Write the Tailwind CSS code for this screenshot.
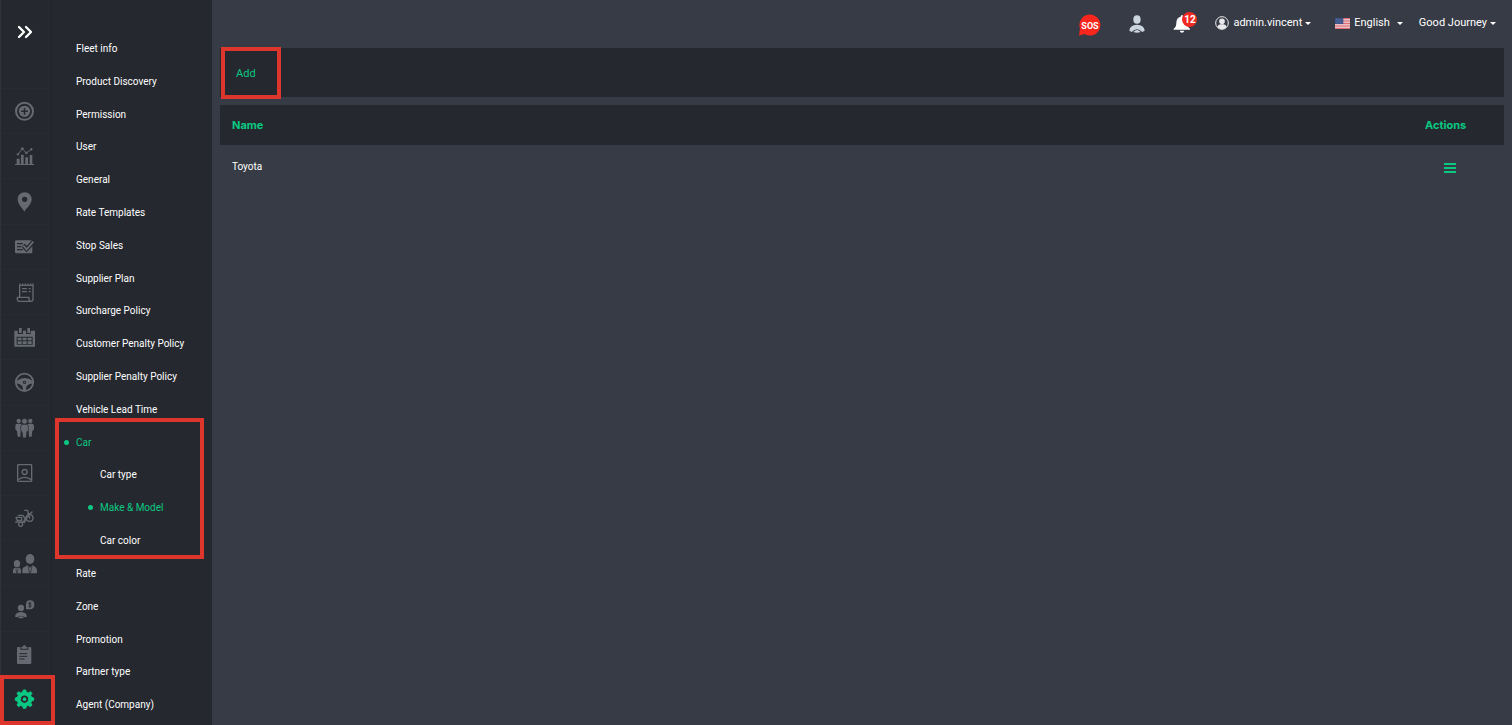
<!DOCTYPE html>
<html lang="en">
<head>
<meta charset="utf-8">
<meta name="viewport" content="width=device-width, initial-scale=1">
<title>Make &amp; Model</title>
<script src="https://cdn.jsdelivr.net/npm/@tailwindcss/browser@4"></script>
</head>
<body class="flex min-h-screen bg-[#373b45] font-[Roboto,'Liberation_Sans',sans-serif] text-[10px] text-white">

<!-- Icon rail -->
<nav aria-label="Main" class="relative flex w-[52px] shrink-0 flex-col border-x border-l-[#30333c] border-r-[#20232a] bg-[#25282f] pb-1 text-[#666971]">
  <button aria-label="Expand menu" class="flex h-[88px] items-start justify-center pt-[19px] pr-1 text-white">
    <svg class="size-[26px]" viewBox="33 57 78 78" fill="none" stroke="currentColor" stroke-width="7" stroke-linecap="round" stroke-linejoin="round"><path d="M57 81l15 15-15 15M78 81l15 15-15 15"/></svg>
  </button>
  <a href="#" aria-label="New booking" class="flex flex-1 items-center justify-center border-t border-[#282b32] pr-1">
    <svg class="size-[26px]" viewBox="33 23 78 78" fill="none" stroke="currentColor"><circle cx="73.500" cy="63" r="25.500" stroke-width="6"/><circle cx="73.500" cy="63" r="17" fill="currentColor" stroke="none"/><path d="M73.500 53v20M63.500 63h20" stroke="#25282f" stroke-width="4.500"/></svg>
  </a>
  <a href="#" aria-label="Dashboard" class="flex flex-1 items-center justify-center border-t border-[#282b32] pr-1">
    <svg class="size-[26px]" viewBox="33 159 78 78" fill="currentColor"><path d="M45 222h57v3H45zM50 206h9v16h-9zM63 194h8v28h-8zM76 202h8v20h-8zM89 195h8v27h-8z"/><g stroke="currentColor" stroke-width="3"><path d="M54 193l13-17 12 13 15-11" fill="none"/><circle cx="54" cy="193" r="2.500"/><circle cx="67" cy="176" r="3"/><circle cx="79" cy="189" r="2.500"/><circle cx="94" cy="178" r="2.500"/></g></svg>
  </a>
  <a href="#" aria-label="Map" class="flex flex-1 items-center justify-center border-t border-[#282b32] pr-1">
    <svg class="size-[26px]" viewBox="33 295 78 78" fill="currentColor"><path fill-rule="evenodd" d="M74 305c-12 0-21 9-21 21 0 14 13 25 20 37 8-12 22-23 22-37 0-12-9-21-21-21zm0 13a8 8 0 110 16 8 8 0 010-16z"/></svg>
  </a>
  <a href="#" aria-label="Bookings" class="flex flex-1 items-center justify-center border-t border-[#282b32] pr-1">
    <svg class="size-[26px]" viewBox="33 25 78 78" fill="currentColor"><path d="M49 44h46l-14 17-7-7-7 7 13 14 17-19v24q0 3-3 3H49q-4 0-4-4V48q0-4 4-4z"/><path d="M51 54h17M51 63h13M51 72h17" stroke="#25282f" stroke-width="3.500"/><path d="M70 61l10 10 21-22" fill="none" stroke="#25282f" stroke-width="12"/><path d="M70 60l10 11 20-23" fill="none" stroke="currentColor" stroke-width="6"/></svg>
  </a>
  <a href="#" aria-label="Reports" class="flex flex-1 items-center justify-center border-t border-[#282b32] pr-1">
    <svg class="size-[26px]" viewBox="33 161 78 78" fill="none" stroke="currentColor" stroke-width="4" stroke-linejoin="round"><path d="M59 215v-35h40v42q0 6-6 6H58q-6 0-6-6v-6h35v6q0 6 6 6"/><path d="M58 177h4M66 177h4M74 177h4M82 177h4M90 177h4M97 177h4" stroke-width="5"/><path d="M66 190h15M86 190h6M66 199h15M86 199h6" stroke-width="3.500"/></svg>
  </a>
  <a href="#" aria-label="Calendar" class="flex flex-1 items-center justify-center border-t border-[#282b32] pr-1">
    <svg class="size-[26px]" viewBox="33 297 78 78" fill="currentColor"><path fill-rule="evenodd" d="M43 317h10v10h16v-10h9v10h14v-10h13v48H43zM50 335v24h48v-24z"/><path d="M57 309h8v15h-8zM70 317h7v7h-7zM82 309h8v15h-8z"/><path d="M53 338h12v8H53zM68 338h12v8H68zM83 338h12v8H83zM53 349h12v8H53zM68 349h12v8H68zM83 349h12v8H83z"/></svg>
  </a>
  <a href="#" aria-label="Drivers" class="flex flex-1 items-center justify-center border-t border-[#282b32] pr-1">
    <svg class="size-[26px]" viewBox="33 28 78 78" fill="none" stroke="currentColor"><circle cx="73.500" cy="68" r="26" stroke-width="5.500"/><path fill="currentColor" stroke="none" fill-rule="evenodd" d="M49 65q12-10 25-10t25 10v6q-13 2-19 8l-3 14h-7l-3-14q-6-6-18-8zM73.500 63a5 5 0 100 10 5 5 0 000-10z"/><circle cx="73.500" cy="68" r="2" fill="currentColor" stroke="none"/></svg>
  </a>
  <a href="#" aria-label="Customers" class="flex flex-1 items-center justify-center border-t border-[#282b32] pr-1">
    <svg class="size-[26px]" viewBox="33 164 78 78" fill="currentColor"><circle cx="56" cy="182" r="6.500"/><circle cx="91" cy="182" r="6.500"/><path d="M52 190h9q4 0 4 5v13l-3 4-1 17h-8l-2-17-5-5v-11q0-6 6-6zM86 190h9q7 0 7 6v11l-5 5-2 17h-8l-1-17-4-4v-13q0-5 4-5z"/><g stroke="#25282f" stroke-width="2"><circle cx="73.500" cy="183" r="8.500"/><path d="M69 192h9q7 0 7 7v11l-4 4-3 19h-9l-3-19-4-4v-11q0-7 7-7z"/></g></svg>
  </a>
  <a href="#" aria-label="Contacts" class="flex flex-1 items-center justify-center border-t border-[#282b32] pr-1">
    <svg class="size-[26px]" viewBox="33 300 78 78" fill="none" stroke="currentColor" stroke-width="4"><rect x="53" y="314" width="42" height="50" rx="2"/><circle cx="74" cy="336" r="7.500"/><path d="M55 359q18-14 38 0"/></svg>
  </a>
  <a href="#" aria-label="Delivery" class="flex flex-1 items-center justify-center border-t border-[#282b32] pr-1">
    <svg class="size-[26px]" viewBox="33 31 78 78" fill="none" stroke="currentColor" stroke-width="4" stroke-linecap="round" stroke-linejoin="round"><circle cx="89" cy="70" r="10"/><circle cx="62" cy="89" r="6"/><path d="M74 47h9l6 23M83 57h8l5-5M79 66l-9 16h-7M73 84q3-13 13-21M48 68h17v9H51zM47 82h12M55 62h14l5 8"/></svg>
  </a>
  <a href="#" aria-label="Partners" class="flex flex-1 items-center justify-center border-t border-[#282b32] pr-1">
    <svg class="size-[26px]" viewBox="33 166 78 78" fill="currentColor"><ellipse cx="90" cy="193" rx="13" ry="15"/><path d="M67 236v-11q0-7 8-9l7-4 8 7 8-7 7 4q6 3 6 11v9z"/><ellipse cx="51" cy="207" rx="9.500" ry="11"/><path d="M39 236v-9q0-6 6-8l6 2 6-2q6 2 6 8v9z"/><path d="M84 215l5 21M96 215l-5 21M48 222l2 14M54 222l-2 14" stroke="#25282f" stroke-width="2"/></svg>
  </a>
  <a href="#" aria-label="Payouts" class="flex flex-1 items-center justify-center border-t border-[#282b32] pr-1">
    <svg class="size-[26px]" viewBox="33 302 78 78" fill="currentColor"><circle cx="63" cy="338" r="9.500"/><path d="M45 364q1-13 18-14 17 1 18 14l-6 2q-12-9-24 0z"/><path d="M54 366q9-6 18 0l-4 3H58z"/><path d="M78 342v-14q0-13 12-13 13 0 13 13t-13 14z"/><path d="M94 324q-5-4-8 0-1 3 4 4 5 2 3 5-3 4-8 0M90 320v17" fill="none" stroke="#25282f" stroke-width="2.500"/></svg>
  </a>
  <a href="#" aria-label="Logs" class="flex flex-1 items-center justify-center border-t border-[#282b32] pr-1">
    <svg class="size-[26px]" viewBox="33 138 78 78" fill="currentColor"><path d="M55 156h6v8h24v-8h5q4 0 4 4v43q0 4-4 4H55q-4 0-4-4v-43q0-4 4-4z"/><path d="M64 161v-6h5q0-5 4-5t4 5h5v6z"/><path d="M58 176h24M58 184h24M58 192h16" stroke="#25282f" stroke-width="3"/></svg>
  </a>
  <a href="#" aria-label="Settings" aria-current="page" class="flex flex-1 items-center justify-center border-t border-[#282b32] pr-1 text-[#0bc983]">
    <svg class="size-[26px]" viewBox="33 274 78 78" fill="currentColor"><path fill-rule="evenodd" stroke="currentColor" stroke-width="3" stroke-linejoin="round" d="M70 286h7l2 7 6 2 6-4 5 5-4 6 3 6 6 2v7l-6 2-3 6 4 6-5 5-6-4-6 3-2 6h-7l-2-6-6-3-6 4-5-5 4-6-3-6-6-2v-7l6-2 3-6-4-6 5-5 6 4 6-2zM73.500 301a12.500 12.500 0 100 25 12.500 12.500 0 000-25z"/><circle cx="73.500" cy="313.500" r="5.500"/></svg>
  </a>
  <div class="pointer-events-none absolute bottom-0 -left-px z-10 h-[50px] w-[55px] border-4 border-[#de352d]"></div>
</nav>

<!-- Settings menu -->
<nav aria-label="Settings" class="w-40 shrink-0 bg-[#25282f]">
  <ul class="flex h-full flex-col pt-8 pb-1 pl-6">
    <li class="flex min-h-6 flex-1 items-center"><a href="#">Fleet info</a></li>
    <li class="flex min-h-6 flex-1 items-center"><a href="#">Product Discovery</a></li>
    <li class="flex min-h-6 flex-1 items-center"><a href="#">Permission</a></li>
    <li class="flex min-h-6 flex-1 items-center"><a href="#">User</a></li>
    <li class="flex min-h-6 flex-1 items-center"><a href="#">General</a></li>
    <li class="flex min-h-6 flex-1 items-center"><a href="#">Rate Templates</a></li>
    <li class="flex min-h-6 flex-1 items-center"><a href="#">Stop Sales</a></li>
    <li class="flex min-h-6 flex-1 items-center"><a href="#">Supplier Plan</a></li>
    <li class="flex min-h-6 flex-1 items-center"><a href="#">Surcharge Policy</a></li>
    <li class="flex min-h-6 flex-1 items-center"><a href="#">Customer Penalty Policy</a></li>
    <li class="flex min-h-6 flex-1 items-center"><a href="#">Supplier Penalty Policy</a></li>
    <li class="flex min-h-6 flex-1 items-center"><a href="#">Vehicle Lead Time</a></li>
    <li class="relative -ml-3 flex flex-4 flex-col">
      <div class="flex min-h-6 flex-1 items-center gap-[7px] text-[#0bc983]"><span class="size-[5px] rounded-full bg-current"></span><a href="#">Car</a></div>
      <ul class="flex flex-3 flex-col pl-6">
        <li class="flex min-h-6 flex-1 items-center pl-3"><a href="#">Car type</a></li>
        <li class="flex min-h-6 flex-1 items-center gap-[7px] text-[#0bc983]"><span class="size-[5px] rounded-full bg-current"></span><a href="#" aria-current="page">Make &amp; Model</a></li>
        <li class="flex min-h-6 flex-1 items-center pl-3"><a href="#">Car color</a></li>
      </ul>
      <div class="pointer-events-none absolute -top-2 right-2 -bottom-0.5 -left-[9px] border-4 border-[#de352d]"></div>
    </li>
    <li class="flex min-h-6 flex-1 items-center"><a href="#">Rate</a></li>
    <li class="flex min-h-6 flex-1 items-center"><a href="#">Zone</a></li>
    <li class="flex min-h-6 flex-1 items-center"><a href="#">Promotion</a></li>
    <li class="flex min-h-6 flex-1 items-center"><a href="#">Partner type</a></li>
    <li class="flex min-h-6 flex-1 items-center"><a href="#">Agent (Company)</a></li>
  </ul>
</nav>

<div class="flex min-w-0 flex-1 flex-col px-2">
  <header class="flex h-12 items-center justify-end pr-2 text-[11px]">
    <button aria-label="SOS" class="mr-7">
      <svg class="mt-px h-[22px] w-[22px]" viewBox="0 0 22 22"><path d="M0 21.500l1-7A10.500 10.500 0 1111 21.500q-3 0-5-1.500z" fill="#f8261d"/><text x="11" y="15" text-anchor="middle" class="fill-white font-[Roboto,sans-serif] text-[9px] font-bold">SOS</text></svg>
    </button>
    <button aria-label="Profile" class="mr-7">
      <svg class="h-[18px] w-4" viewBox="0 0 48 54" fill="#cbd5e0"><ellipse cx="24" cy="13.500" rx="11" ry="13"/><path d="M1 47q1-17 23-18 22 1 23 18l-7 4Q24 35 8 51z"/><path d="M13 51q11-12 22 0-11 5-22 0z"/></svg>
    </button>
    <button aria-label="12 notifications" class="relative mr-6">
      <svg class="h-[18px] w-[18px]" viewBox="0 0 54 54" fill="#fff"><path d="M27 0q3 0 3 5 13 3 13 19 0 13 8 17v3H2v-3q8-4 8-17 0-16 13-19 0-5 4-5zM20 47h14q-2 6-7 6t-7-6z"/></svg>
      <span class="absolute -top-[3px] left-[9px] flex size-[15px] items-center justify-center rounded-full bg-[#f02a20] text-[10px] font-bold text-white">12</span>
    </button>
    <button class="mr-6 flex items-center pb-0.5">
      <svg class="mr-1 size-[14px]" viewBox="0 0 42 42"><circle cx="21" cy="21" r="19" fill="none" stroke="#e8eaed" stroke-width="3"/><circle cx="21" cy="16" r="8.500" fill="#e8eaed"/><path d="M7 33q2-8 9-8h10q7 0 9 8-6 7-14 7T7 33z" fill="#e8eaed"/></svg>
      admin.vincent
      <span class="ml-[3px] border-x-3 border-t-3 border-x-transparent border-t-white"></span>
    </button>
    <button class="mr-4 flex items-center pb-0.5">
      <svg class="mr-1 h-[11px] w-[15px]" viewBox="0 0 45 33"><path fill="#f2e9ec" d="M0 0h45v33H0z"/><path stroke="#d8505c" stroke-width="2.500" d="M0 1.500h45M0 6.500h45M0 11.500h45M0 16.500h45M0 21.500h45M0 26.500h45M0 31.500h45"/><path fill="#3b5188" d="M0 0h25v18H0z"/><path stroke="#aab5d0" stroke-width="1.500" stroke-dasharray="1.500 3" d="M3 4h20M5 9h18M3 14h20"/></svg>
      English
      <span class="ml-[7px] border-x-3 border-t-3 border-x-transparent border-t-white"></span>
    </button>
    <button class="flex items-center pb-0.5">
      Good Journey
      <span class="ml-[3px] border-x-3 border-t-3 border-x-transparent border-t-white"></span>
    </button>
  </header>

  <main>
    <div class="relative mb-2 flex h-[49px] items-center bg-[#25282f]">
      <button class="px-4 pt-[3px] text-[11px] text-[#0bc983]">Add</button>
      <div class="pointer-events-none absolute -top-px left-px h-[52px] w-[60px] border-4 border-[#de352d]"></div>
    </div>
    <table class="w-full text-left text-[11px]">
      <thead class="bg-[#25282f] font-[Inter,sans-serif] text-[#0bc983]">
        <tr class="h-10"><th class="px-3 font-bold">Name</th><th class="w-[91px] pl-3 font-bold">Actions</th></tr>
      </thead>
      <tbody>
        <tr class="h-10"><td class="px-3 pt-0.5 text-[10px]">Toyota</td>
          <td class="pl-[31px]"><button aria-label="Row actions" class="block pt-1.5 text-[#0bc983]"><svg class="h-[10px] w-3" viewBox="0 0 12 10" fill="currentColor"><path d="M0 0h12v2H0zM0 4h12v2H0zM0 8h12v2H0z"/></svg></button></td></tr>
      </tbody>
    </table>
  </main>
</div>
</body>
</html>
